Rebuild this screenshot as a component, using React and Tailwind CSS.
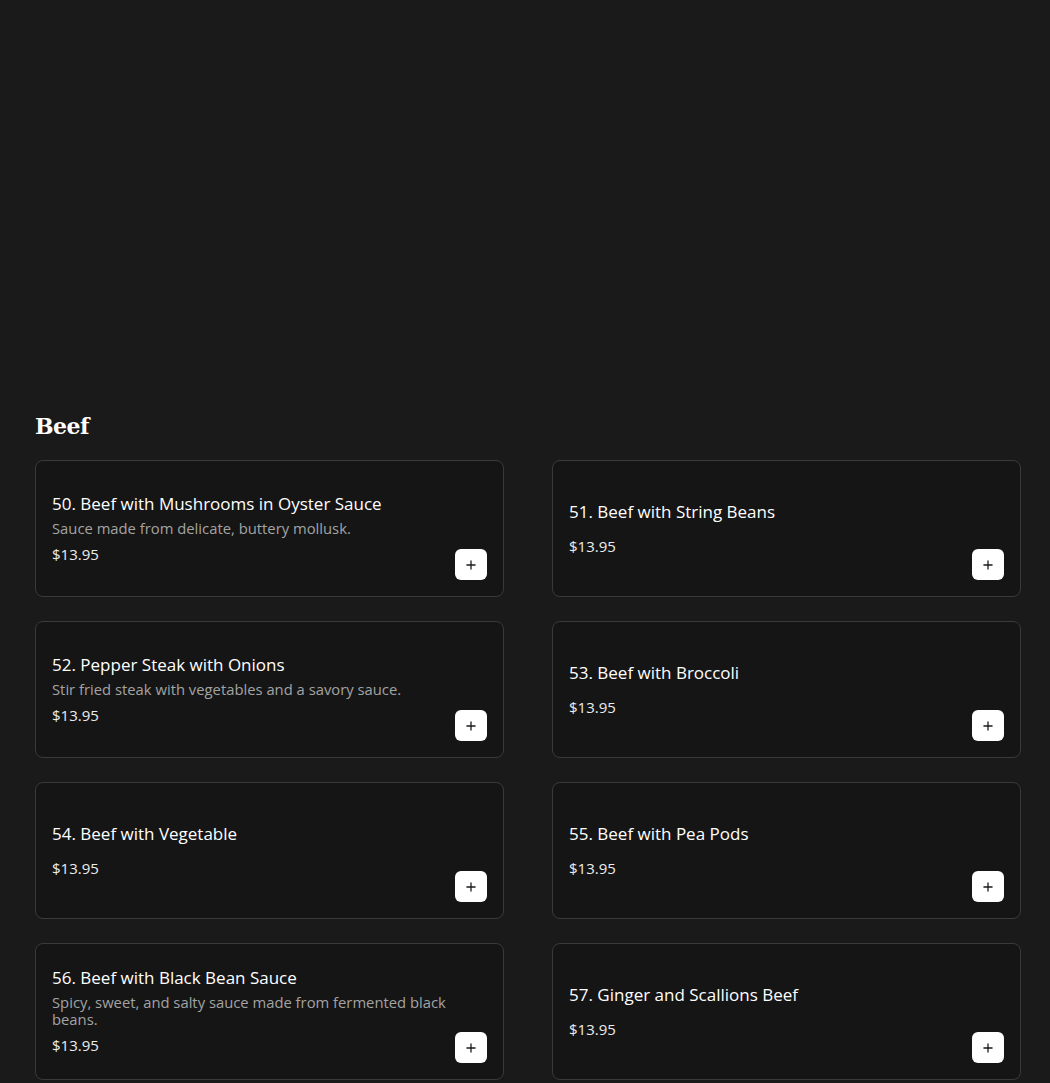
import React from 'react';
import { Plus } from 'lucide-react';

const items = [
  { name: '50. Beef with Mushrooms in Oyster Sauce', desc: 'Sauce made from delicate, buttery mollusk.', price: '$13.95' },
  { name: '51. Beef with String Beans', price: '$13.95' },
  { name: '52. Pepper Steak with Onions', desc: 'Stir fried steak with vegetables and a savory sauce.', price: '$13.95' },
  { name: '53. Beef with Broccoli', price: '$13.95' },
  { name: '54. Beef with Vegetable', price: '$13.95' },
  { name: '55. Beef with Pea Pods', price: '$13.95' },
  { name: '56. Beef with Black Bean Sauce', desc: 'Spicy, sweet, and salty sauce made from fermented black beans.', price: '$13.95' },
  { name: '57. Ginger and Scallions Beef', price: '$13.95' },
];

const MenuCard = ({ item }) => (
  <div className="flex h-[137px] rounded-lg border border-[#3a3a3a] bg-[#151515] pl-4 pr-4 pb-4">
    <div className="flex flex-1 flex-col justify-center pt-[16px]">
      <h3 className="text-[17px] font-medium leading-6 text-white">{item.name}</h3>
      {item.desc && (
        <p className="mt-[4px] text-[14.8px] leading-[17px] text-[#a3a3a3]">{item.desc}</p>
      )}
      <p className={`${item.desc ? 'mt-[5px]' : 'mt-[10px]'} text-[15px] leading-6 text-[#ececec]`}>{item.price}</p>
    </div>
    <div className="flex items-end">
      <button className="flex h-[31px] w-[32px] items-center justify-center rounded-md bg-white text-[#1a1a1a]">
        <Plus size={14} strokeWidth={2.2} />
      </button>
    </div>
  </div>
);

const App = () => {
  return (
    <div
      className="min-h-[1083px] bg-[#1a1a1a] pt-[405px] pl-[35px]"
      style={{ fontFamily: '"Open Sans", "Liberation Sans", sans-serif' }}
    >
      <h2
        className="mb-[13px] text-[22px] font-bold leading-[42px] tracking-[-0.5px] text-white"
        style={{ fontFamily: '"DejaVu Serif", "Liberation Serif", serif' }}
      >
        Beef
      </h2>
      <div className="grid w-[986px] grid-cols-2 gap-x-[48px] gap-y-[24px]">
        {items.map((item) => (
          <MenuCard key={item.name} item={item} />
        ))}
      </div>
    </div>
  );
};

export default App;
